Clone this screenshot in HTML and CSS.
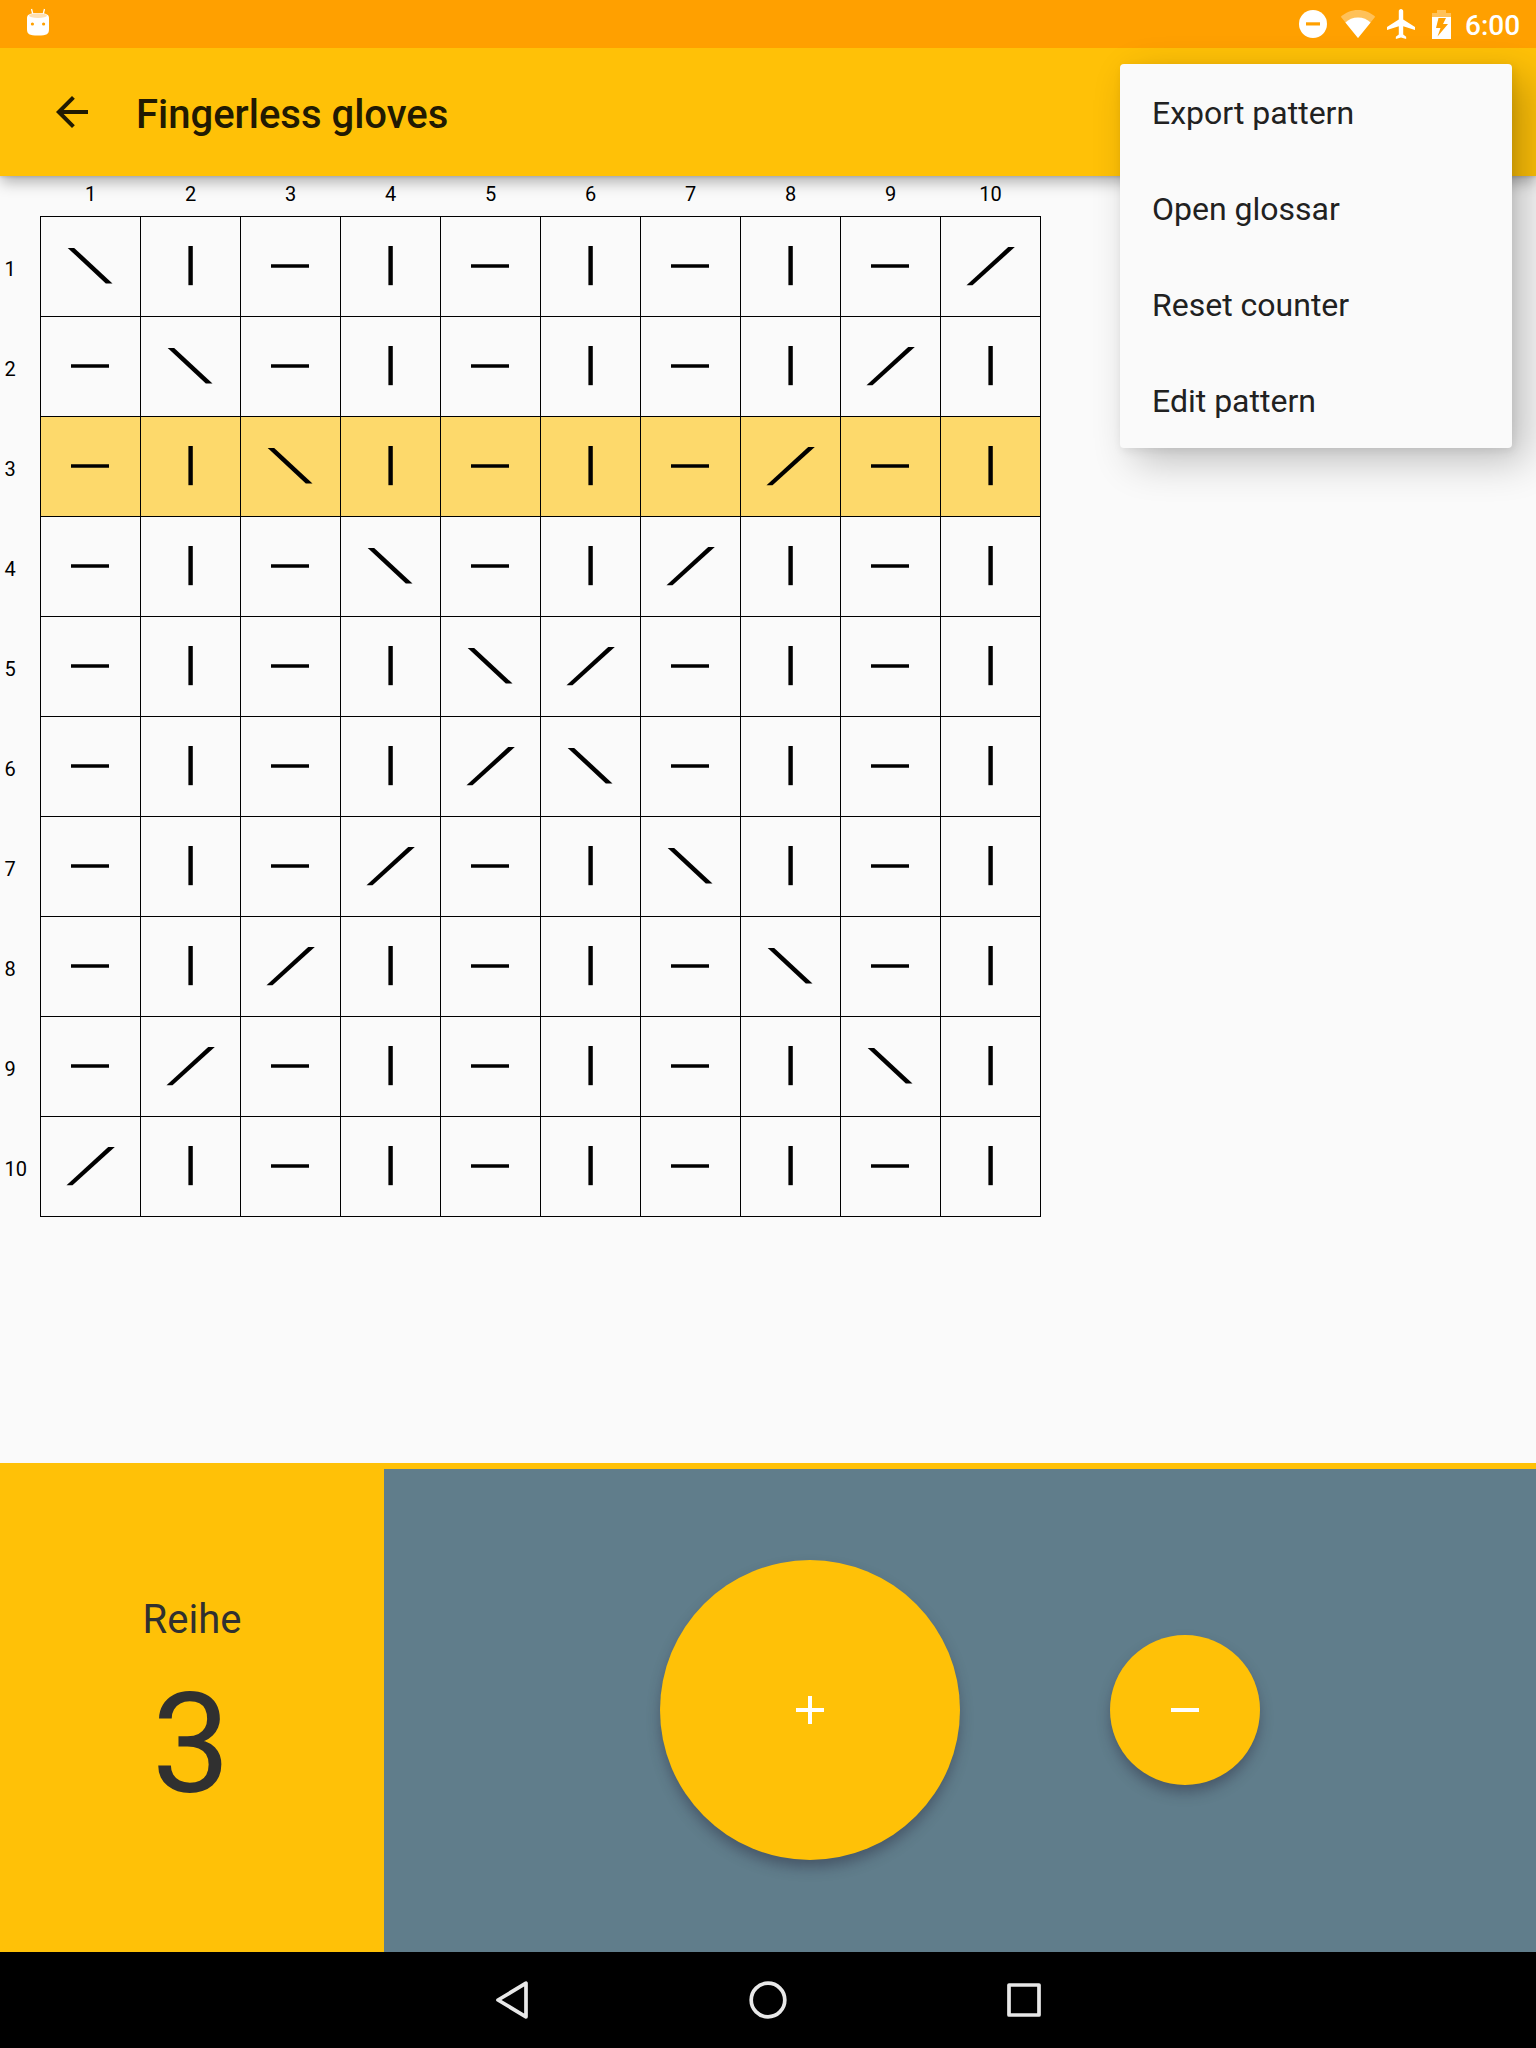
FILE: index.html
```
<!DOCTYPE html>
<html lang="en">
<head>
<meta charset="utf-8">
<title>Fingerless gloves</title>
<link rel="stylesheet" href="styles.css">
</head>
<body>
<svg class="symbols" width="0" height="0" aria-hidden="true">
  <symbol id="knit" viewBox="1 1 99 99"><path d="M48.4 30h4.4v39.2h-4.4z"/></symbol>
  <symbol id="purl" viewBox="1 1 99 99"><path d="M31 48.3h38v3.4H31z"/></symbol>
  <symbol id="left" viewBox="1 1 99 99"><path d="M27.7 31.9h6.5l38.3 35.6h-6.7z"/></symbol>
  <symbol id="right" viewBox="1 1 99 99"><path d="M68.2 31.1h6.6L32.5 69.3h-6z"/></symbol>
</svg>
<div class="screen">
  <header class="status-bar">
    <svg class="droid" viewBox="0 0 24 28"><path d="M5.5 1l1.3 5M18.500 1l-1.300 5" stroke="#fff" stroke-width="1.3" fill="none"/><path fill="#fff" d="M1 10C1 7 3 5 12 5s11 2 11 5v11c0 5-2 6.500-11 6.500S1 26 1 21z"/><ellipse cx="12" cy="7.6" rx="9" ry="2.3" fill="#ffe0b2"/><circle cx="6.4" cy="16" r="1.6" fill="#ffa000"/><circle cx="17.6" cy="16" r="1.6" fill="#ffa000"/></svg>
    <div class="status-icons">
      <svg width="28" height="28" viewBox="0 0 28 28"><circle cx="14" cy="14" r="14" fill="#fff"/><path d="M7 12.3h14v3.2H7z" fill="#ffa000"/></svg>
      <svg class="wifi" width="36" height="28" viewBox="0 0 36 28"><path d="M18 28L.8 6.800C5.500 2.600 11.500 0 18 0s12.500 2.600 17.200 6.800z" fill="#fff" opacity=".35"/><path d="M18 28L5.400 12.400C8.600 9.500 13 7.500 18 7.500s9.400 2 12.600 4.900z" fill="#fff"/></svg>
      <svg class="plane" width="28" height="30" viewBox="2 2 19 20" preserveAspectRatio="none"><path fill="#fff" d="M21 16v-2l-8-5V3.500c0-.830-.670-1.500-1.500-1.500S10 2.670 10 3.500V9l-8 5v2l8-2.500V19l-2 1.500V22l3.500-1 3.500 1v-1.500L13 19v-5.500l8 2.500z"/></svg>
      <svg class="battery" width="19" height="29" viewBox="0 0 19 29"><path fill="#fff" opacity=".35" d="M5 0h9v3h5v4H0V3h5z"/><path fill="#fff" fill-rule="evenodd" d="M0 7h19v22H0zM14 8H6.500L4 18h4.500L5.500 26.500 16 14h-5z"/></svg>
      <span class="clock">6:00</span>
    </div>
  </header>
  <div class="app-bar">
    <svg class="back" width="32" height="32" viewBox="4 4 16 16"><path fill="#211a02" d="M20 11H7.830l5.590-5.590L12 4l-8 8 8 8 1.410-1.410L7.830 13H20v-2z"/></svg>
    <h1>Fingerless gloves</h1>
  </div>
  <main class="chart-area"><div class="chart" id="chart"></div></main>
  <section class="counter">
    <div class="row-count">
      <div class="row-label">Reihe</div>
      <div class="row-number">3</div>
    </div>
    <div class="controls">
      <button class="fab fab-large" aria-label="Plus"><svg width="28" height="28" viewBox="0 0 28 28"><path d="M12 0h4v12h12v4H16v12h-4V16H0v-4h12z" fill="#fff"/></svg></button>
      <button class="fab" aria-label="Minus"><svg width="28" height="28" viewBox="0 0 28 28"><path d="M0 12h28v4H0z" fill="#fff"/></svg></button>
    </div>
  </section>
  <nav class="nav-bar">
    <span><svg width="40" height="40" viewBox="0 0 40 40"><path d="M34 3.200v33.600L6 20z"/></svg></span>
    <span><svg width="40" height="40" viewBox="0 0 40 40"><circle cx="20" cy="20" r="16.800"/></svg></span>
    <span><svg width="40" height="40" viewBox="0 0 40 40"><rect x="5" y="5" width="30" height="30"/></svg></span>
  </nav>
  <ul class="menu">
    <li>Export pattern</li>
    <li>Open glossar</li>
    <li>Reset counter</li>
    <li>Edit pattern</li>
  </ul>
</div>
<script src="chart.js"></script>
</body>
</html>
```
FILE: styles.css
```
* { box-sizing: border-box; }
body { margin: 0; font-family: Roboto, "Liberation Sans", sans-serif; background: #fafafa; }
.symbols { position: absolute; }
.screen { position: relative; width: 1536px; height: 2048px; display: flex; flex-direction: column; overflow: hidden; }
svg { display: block; flex: none; }

.status-bar { height: 48px; flex: none; background: #ffa000; display: flex; justify-content: space-between; align-items: flex-start; padding: 0 16px 0 26px; }
.droid { width: 24px; height: 28px; margin-top: 8px; }
.status-icons { display: flex; align-items: center; height: 48px; }
.wifi { margin-left: 13px; }
.plane { margin-left: 11px; }
.battery { margin-left: 17px; }
.clock { margin-left: 14px; width: 55px; font-size: 28px; font-weight: 500; line-height: 48px; color: #fff; padding-top: 3px; white-space: nowrap; }

.app-bar { position: relative; z-index: 1; height: 128px; flex: none; background: #ffc107; display: flex; align-items: center; padding-left: 56px; box-shadow: 0 7px 14px -1px rgba(0,0,0,.3), 0 1px 3px rgba(0,0,0,.12); clip-path: inset(0 0 -40px 0); }
.app-bar h1 { margin: 6px 0 0 48px; font-size: 40px; font-weight: 500; line-height: 48px; color: #211a02; }

.chart-area { height: 1287px; flex: none; }
.chart { display: grid; grid-template-columns: 40px repeat(10, 100px); grid-template-rows: 40px repeat(10, 100px); font-size: 20px; color: #000; }
.col-head { text-align: center; line-height: 24px; padding: 6px 0 0 1px; }
.row-head { padding: 41px 0 0 4.5px; line-height: 24px; }
.cell { border: 0 solid #000; border-width: 1px 0 0 1px; }
.cell svg { width: 99px; height: 99px; }
.cell.last-col { border-right-width: 1px; margin-right: -1px; }
.cell.last-row { border-bottom-width: 1px; margin-bottom: -1px; }
.cell.current { background: #fdd96b; }

.counter { height: 489px; flex: none; display: flex; background: #ffc107; }
.row-count { width: 384px; text-align: center; color: #303030; padding-top: 133px; }
.row-label { font-size: 40px; line-height: 48px; }
.row-number { font-size: 140px; line-height: 164px; margin-top: 18px; padding-right: 2px; }
.controls { flex: 1; margin-top: 6px; padding-bottom: 1px; background: #607d8b; display: flex; align-items: center; justify-content: center; gap: 150px; }
.fab { width: 150px; height: 150px; border: 0; padding: 0; border-radius: 50%; background: #ffc107; display: flex; align-items: center; justify-content: center; box-shadow: 0 8px 14px -1px rgba(40,40,60,.45); }
.fab-large { width: 300px; height: 300px; }

.nav-bar { height: 96px; flex: none; background: #000; display: flex; justify-content: center; }
.nav-bar span { width: 256px; display: flex; align-items: center; justify-content: center; }
.nav-bar svg { fill: none; stroke: #e8e8e8; stroke-width: 3.7; stroke-linejoin: round; }

.menu { position: absolute; z-index: 2; top: 64px; left: 1120px; width: 392px; margin: 0; padding: 0; list-style: none; background: #fafafa; border-radius: 4px; box-shadow: 14px 13px 40px rgba(0,0,0,.24), 2px 3px 10px rgba(0,0,0,.08); }
.menu li { height: 96px; padding: 1px 32px 0; font-size: 32px; line-height: 96px; color: #212121; }
```
FILE: chart.js
```
// k = knit, p = purl, l = left-leaning decrease, r = right-leaning decrease
const rows = [
  "lkpkpkpkpr",
  "plpkpkpkrk",
  "pklkpkprpk",
  "pkplpkrkpk",
  "pkpklrpkpk",
  "pkpkrlpkpk",
  "pkprpklkpk",
  "pkrkpkplpk",
  "prpkpkpklk",
  "rkpkpkpkpk"
];
const currentRow = 3;
const symbols = { k: "knit", p: "purl", l: "left", r: "right" };

let html = "<div></div>";
for (let c = 1; c <= 10; c++) html += `<div class="col-head">${c}</div>`;
rows.forEach((row, r) => {
  html += `<div class="row-head">${r + 1}</div>`;
  [...row].forEach((s, c) => {
    const cls = ["cell"];
    if (r + 1 === currentRow) cls.push("current");
    if (c === 9) cls.push("last-col");
    if (r === 9) cls.push("last-row");
    html += `<div class="${cls.join(" ")}"><svg><use href="#${symbols[s]}"/></svg></div>`;
  });
});
document.getElementById("chart").innerHTML = html;
```
